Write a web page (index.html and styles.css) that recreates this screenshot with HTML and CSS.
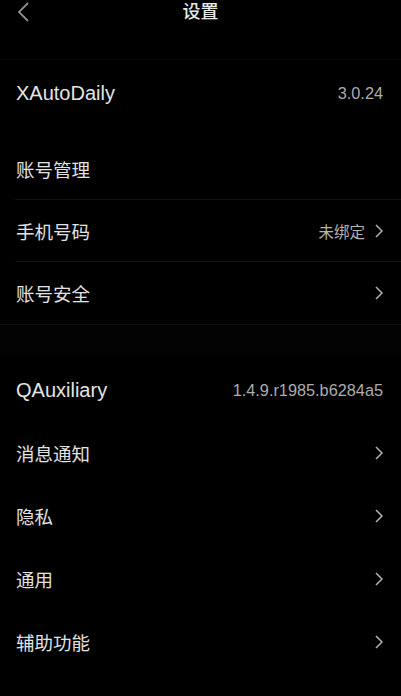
FILE: index.html
```html
<!DOCTYPE html>
<html lang="zh-CN">
<head>
	<meta charset="UTF-8">
	<title>设置</title>
	<link rel="stylesheet" href="styles.css">
</head>
<body>
<!-- 标题栏 -->
<header class="topbar">
	<svg class="back" width="14" height="22" viewBox="0 0 14 22">
		<polyline points="12,2 3,11 12,20" fill="none" stroke="#8c8c8c" stroke-width="1.8"/>
	</svg>
	<span class="title">设置</span>
</header>

<!-- XAutoDaily -->
<section class="group">
	<div class="group-head">
		<span class="name">XAutoDaily</span>
		<span class="ver">3.0.24</span>
	</div>
	<div class="row line">
		<span class="label">账号管理</span>
	</div>
	<div class="row line">
		<span class="label">手机号码</span>
		<span class="extra">未绑定</span>
		<svg class="arrow" width="8" height="14" viewBox="0 0 8 14"><polyline points="1,1 7,7 1,13" fill="none" stroke="#b4b4b4" stroke-width="1.5"/></svg>
	</div>
	<div class="row line full">
		<span class="label">账号安全</span>
		<svg class="arrow" width="8" height="14" viewBox="0 0 8 14"><polyline points="1,1 7,7 1,13" fill="none" stroke="#b4b4b4" stroke-width="1.5"/></svg>
	</div>
</section>

<div class="gap"></div>

<!-- QAuxiliary -->
<section class="group second">
	<div class="group-head">
		<span class="name">QAuxiliary</span>
		<span class="ver">1.4.9.r1985.b6284a5</span>
	</div>
	<div class="row">
		<span class="label">消息通知</span>
		<svg class="arrow" width="8" height="14" viewBox="0 0 8 14"><polyline points="1,1 7,7 1,13" fill="none" stroke="#b4b4b4" stroke-width="1.5"/></svg>
	</div>
	<div class="row">
		<span class="label">隐私</span>
		<svg class="arrow" width="8" height="14" viewBox="0 0 8 14"><polyline points="1,1 7,7 1,13" fill="none" stroke="#b4b4b4" stroke-width="1.5"/></svg>
	</div>
	<div class="row">
		<span class="label">通用</span>
		<svg class="arrow" width="8" height="14" viewBox="0 0 8 14"><polyline points="1,1 7,7 1,13" fill="none" stroke="#b4b4b4" stroke-width="1.5"/></svg>
	</div>
	<div class="row">
		<span class="label">辅助功能</span>
		<svg class="arrow" width="8" height="14" viewBox="0 0 8 14"><polyline points="1,1 7,7 1,13" fill="none" stroke="#b4b4b4" stroke-width="1.5"/></svg>
	</div>
</section>
</body>
</html>
```

FILE: styles.css
```css
body {
	margin: 0;
	padding: 0;
	background-color: #000;
	color: #e2e2e2;
	font-family: Roboto, "Noto Sans CJK SC", sans-serif;
	overflow: hidden;
}

/* 标题栏 */
.topbar {
	height: 59px;
	border-bottom: 1px solid #080808;
	display: flex;
	justify-content: center;
	align-items: flex-start;
	position: relative;
}

.topbar .back {
	position: absolute;
	left: 16px;
	top: 1px;
}

.topbar .title {
	font-size: 18px;
	line-height: 24px;
	font-weight: 500;
	color: #e8e8e8;
}

/* 分组 */
.group-head {
	height: 66px;
	margin-bottom: 12px;
	padding: 0 18px 0 16px;
	display: flex;
	align-items: center;
	justify-content: space-between;
	font-family: "Liberation Sans", Arial, sans-serif;
}

.group-head .name {
	font-size: 20px;
	color: #e4e4e4;
}

.group-head .ver {
	font-size: 16.3px;
	color: #acacac;
}

.second .group-head {
	margin-bottom: 0;
	height: 62px;
	padding-top: 4px;
}

.row {
	height: 63px;
	padding: 0 18px 0 16px;
	display: flex;
	align-items: center;
}

.row .label {
	flex: 1;
	font-size: 18.5px;
	color: #e2e2e2;
}

.row .extra {
	font-size: 15.5px;
	color: #b4b4b4;
	margin-right: 10px;
}

.row.line {
	height: 62px;
	border-bottom: 1px solid #111;
}

.row.line:not(.full) {
	border-bottom: none;
	background: linear-gradient(#111, #111) no-repeat 15px 100% / calc(100% - 15px) 1px;
}

.gap {
	height: 30px;
	background-color: #030303;
}
```
